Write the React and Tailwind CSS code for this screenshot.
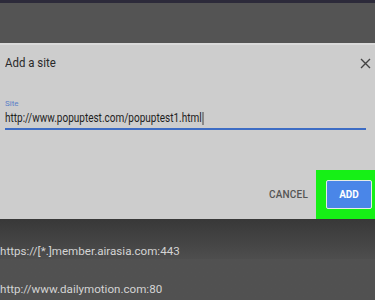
export default function App() {
  return (
    <div className="w-[375px] h-[300px] overflow-hidden bg-[#505050] flex flex-col" style={{ fontFamily: 'Roboto, "Liberation Sans", sans-serif' }}>
      <div className="h-[3px] bg-[#2c2a3a]" />
      <div className="h-[40px] bg-[#545454]" />
      <div className="h-[176px] bg-[#cdcdcd] border-t-2 border-[#dadada] flex flex-col relative">
        <div className="flex items-center justify-between pl-[5px] pr-[4px] pt-[10px]">
          <span className="text-[13px] text-[#2a2a2a] leading-[16px] origin-left scale-x-[0.88] inline-block">Add a site</span>
          <svg width="11" height="11" viewBox="0 0 11 11">
            <path d="M1 1L10 10M10 1L1 10" stroke="#444" strokeWidth="1.4" />
          </svg>
        </div>
        <div className="mt-[28px] px-[5px] mr-[4px]">
          <div className="text-[8px] leading-[10px] text-[#5b7fc7]">Site</div>
          <div className="text-[12.5px] leading-[16px] text-[#1e1e1e] mt-[1px] flex items-center origin-left scale-x-[0.8]">
            http://www.popuptest.com/popuptest1.html<span className="inline-block w-[1px] h-[13px] bg-[#222] ml-[1px]" />
          </div>
          <div className="h-[2px] bg-[#3d6cc4] mt-[2px]" />
        </div>
        <div className="flex-1 flex items-end justify-end">
          <div className="flex items-center">
            <span className="text-[10px] font-medium text-[#555] mr-[8px] tracking-[0.2px]">CANCEL</span>
            <div className="w-[59px] h-[49px] bg-[#16f016] flex items-center pl-[10px]">
              <div className="w-[46px] h-[29px] bg-[#4a86e8] border border-[#e6ece6] rounded-[2px] flex items-center justify-center text-[10px] font-bold text-white">ADD</div>
            </div>
          </div>
        </div>
      </div>
      <div className="flex-1 bg-gradient-to-b from-[#383838] via-[#4e4e4e] to-[#515151] to-[30%] text-[#d4d4d4] text-[11.6px] leading-[14px]">
        <div className="mt-[25px]">https://[*.]member.airasia.com:443</div>
        <div className="mt-[24px]">http://www.dailymotion.com:80</div>
      </div>
    </div>
  );
}
